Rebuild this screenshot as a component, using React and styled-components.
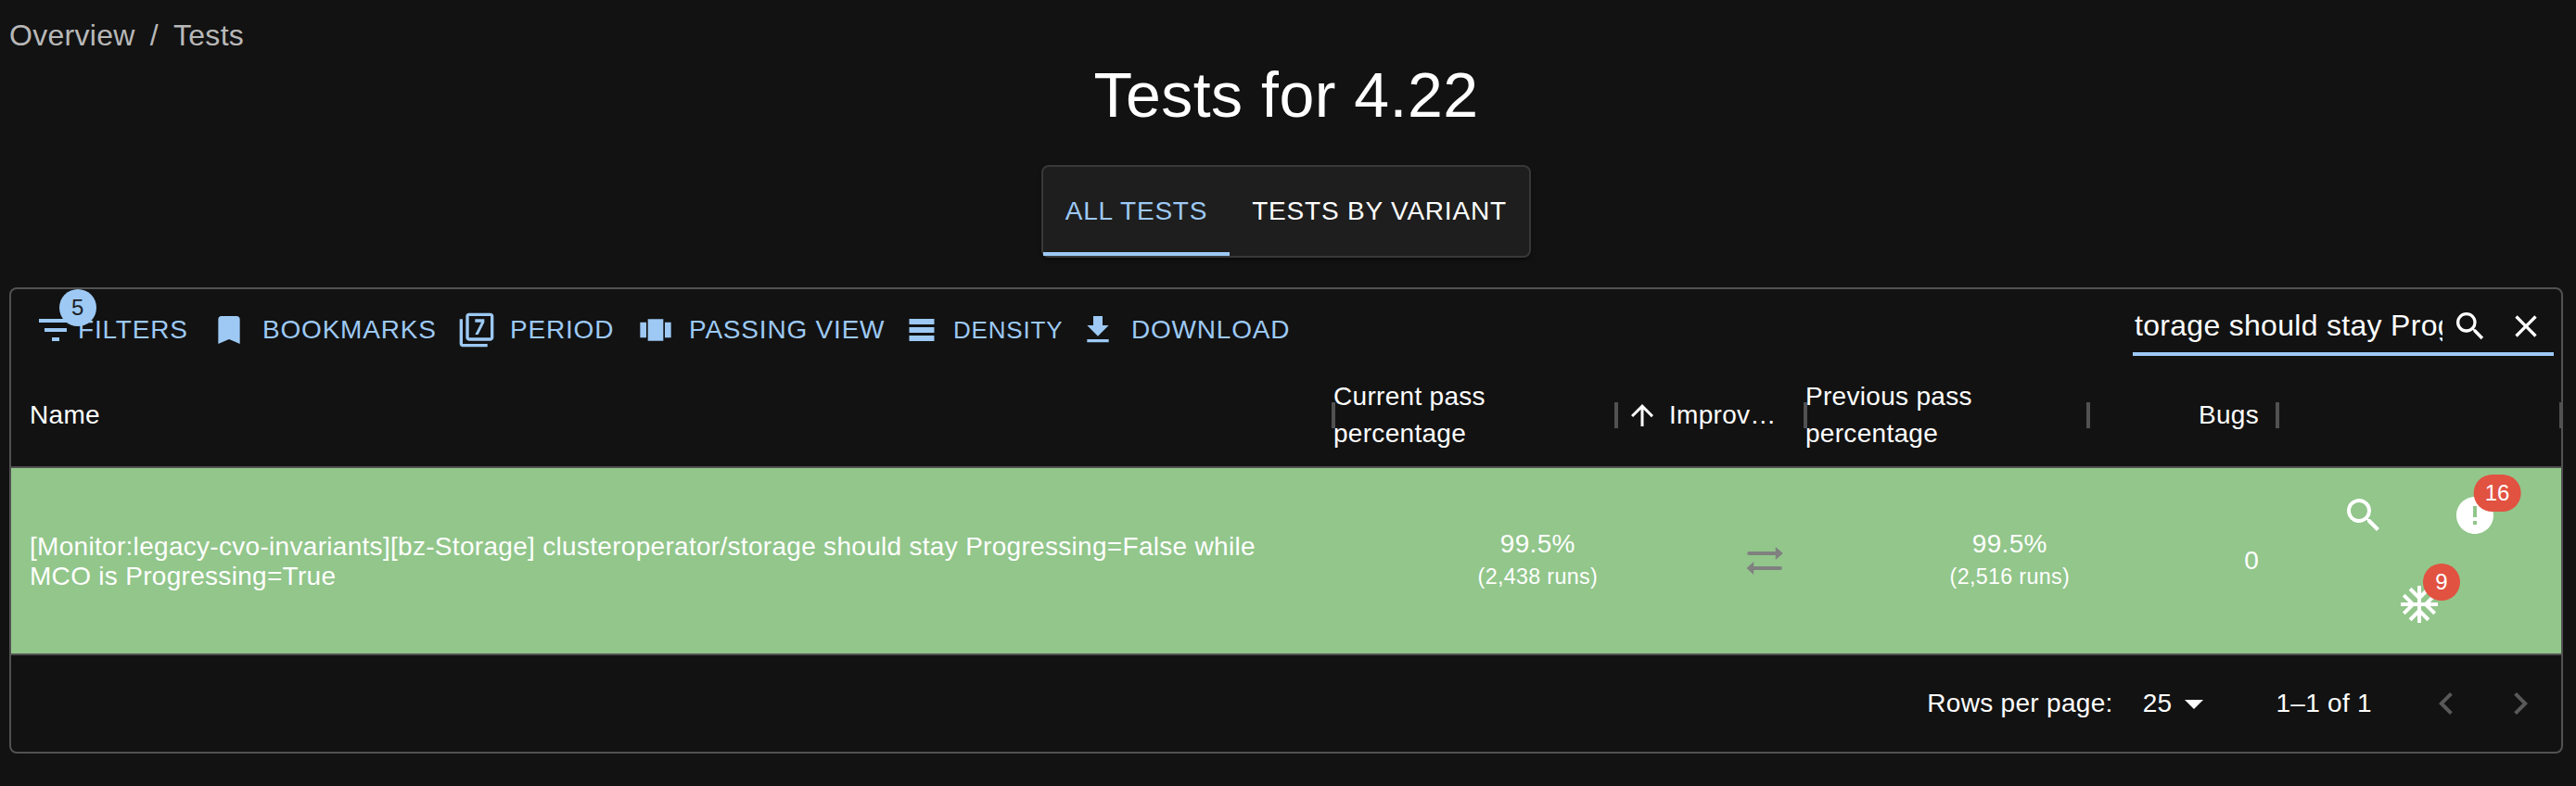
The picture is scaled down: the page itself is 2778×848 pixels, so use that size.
import React from 'react'
import styled, { createGlobalStyle } from 'styled-components'
import {
  MdAcUnit,
  MdArrowDropDown,
  MdArrowUpward,
  MdBookmark,
  MdClose,
  MdError,
  MdFilter7,
  MdFilterList,
  MdGetApp,
  MdKeyboardArrowLeft,
  MdKeyboardArrowRight,
  MdSearch,
  MdTableRows,
  MdViewCarousel,
} from 'react-icons/md'

const colors = {
  bg: '#121212',
  paper: '#1e1e1e',
  line: '#515151',
  primary: '#9dc9f4',
  success: '#92c68b',
  error: '#e15241',
}

const GlobalStyle = createGlobalStyle`
  * {
    box-sizing: border-box;
  }
  body {
    margin: 0;
    background: ${colors.bg};
    color: #fff;
    font-family: "Liberation Sans", Arial, sans-serif;
    font-size: 28px;
    letter-spacing: 0.3px;
  }
  svg {
    display: block;
    flex: none;
  }
`

const Page = styled.div`
  height: 848px;
  padding: 14px 14px 0 10px;
  overflow: hidden;
`

const Breadcrumbs = styled.nav`
  display: flex;
  height: 46px;
  line-height: 48px;
  font-size: 32px;
  color: #b8b8b8;
`

const Separator = styled.span`
  margin: 0 16px;
`

const Title = styled.h1`
  margin: 0;
  height: 84px;
  line-height: 84px;
  font-size: 68px;
  font-weight: 400;
  letter-spacing: 0.5px;
  text-align: center;
`

const Tabs = styled.div`
  display: flex;
  width: 528px;
  height: 100px;
  margin: 34px auto 32px;
  border: 2px solid #383838;
  border-radius: 8px;
  background: ${colors.paper};
  box-shadow: 0 3px 4px rgba(0, 0, 0, 0.35);
`

const Tab = styled.button`
  width: ${({ $width }) => $width}px;
  padding: 4px 0 0;
  border: none;
  border-bottom: 4px solid ${({ $active }) => ($active ? colors.primary : 'transparent')};
  background: none;
  color: ${({ $active }) => ($active ? colors.primary : '#fff')};
  font: inherit;
  letter-spacing: 0.8px;
  white-space: nowrap;
`

const Grid = styled.section`
  height: 503px;
  border: 2px solid ${colors.line};
  border-radius: 8px;
`

const Toolbar = styled.div`
  display: flex;
  height: 80px;
  padding: 14px 8px 0 24px;
`

const ToolButton = styled.button`
  display: flex;
  align-items: center;
  gap: ${({ $gap = 16 }) => $gap}px;
  width: ${({ $width }) => $width}px;
  height: 60px;
  padding: 0;
  border: none;
  background: none;
  color: ${colors.primary};
  font: inherit;
  font-size: ${({ $small }) => ($small ? 26 : 28)}px;
  letter-spacing: 0.8px;
  white-space: nowrap;
`

const SearchField = styled.div`
  display: flex;
  width: 454px;
  height: 58px;
  margin-left: auto;
  border-bottom: 4px solid ${colors.primary};
`

const SearchText = styled.div`
  flex: none;
  width: 334px;
  margin-right: 10px;
  padding-left: 2px;
  line-height: 50px;
  font-size: 32px;
  white-space: nowrap;
  overflow: hidden;
`

const SearchIcon = styled.span`
  flex: none;
  width: ${({ $width = 60 }) => $width}px;
  padding-top: 6px;
`

const BadgeAnchor = styled.span`
  position: relative;
  display: block;
`

const Badge = styled.span`
  position: absolute;
  top: 0;
  left: 100%;
  transform: translate(-50%, -50%);
  min-width: 40px;
  height: 40px;
  padding: 0 12px;
  border-radius: 20px;
  background: ${({ $error }) => ($error ? colors.error : colors.primary)};
  color: ${({ $error }) => ($error ? '#fff' : '#1c2126')};
  line-height: 40px;
  font-size: 24px;
  text-align: center;
`

const Row = styled.div`
  display: grid;
  grid-template-columns: 1426px 305px 204px 305px 204px 306px;
  border-bottom: 2px solid ${colors.line};
`

const HeadRow = styled(Row)`
  height: 113px;
`

const HeadCell = styled.div`
  position: relative;
  display: flex;
  align-items: center;
  justify-content: ${({ $right }) => ($right ? 'flex-end' : 'flex-start')};
  padding: 0 20px 0 ${({ $left = 0 }) => $left}px;
  line-height: 40px;

  &::after {
    content: '';
    position: absolute;
    right: ${({ $last }) => ($last ? 0 : -2)}px;
    top: 42px;
    width: ${({ $last }) => ($last ? 2 : 4)}px;
    height: 28px;
    background: ${colors.line};
  }
`

const SortLabel = styled.span`
  margin-left: 11px;
`

const DataRow = styled(Row)`
  height: 202px;
  background: ${colors.success};
`

const NameCell = styled.div`
  align-self: center;
  padding: 2px 80px 0 20px;
  line-height: 32px;
`

const Cell = styled.div`
  display: flex;
  align-items: center;
  justify-content: flex-end;
  padding-right: 20px;
`

const Percent = styled.div`
  padding-bottom: 2px;
  line-height: 36px;
  text-align: center;

  small {
    display: block;
    line-height: 34px;
    font-size: 23.33px;
  }
`

const Actions = styled.div`
  display: flex;
  flex-wrap: wrap;
  align-content: center;
  justify-content: center;
  gap: 16px 40px;
  padding: 0 50px 2px;
`

const IconButton = styled.button`
  display: grid;
  place-items: center;
  width: 80px;
  height: 80px;
  padding: 0;
  border: none;
  background: none;
  color: inherit;
  font: inherit;
`

const Footer = styled.footer`
  display: flex;
  align-items: center;
  justify-content: flex-end;
  height: 104px;
  padding-right: 20px;
`

const PageSize = styled.span`
  display: flex;
  align-items: center;
  margin: 0 64px 0 32px;
`

const PageArrow = styled.span`
  margin-left: ${({ $space }) => $space}px;
  color: #595959;
`

function FlatTrendIcon() {
  return (
    <svg width="48" height="48" viewBox="0 0 24 24" fill="gray">
      <path d="M3.6 7H17.9V4.5L21.9 8L17.9 11.5V9H3.6A1 1 0 0 1 3.6 7Z" />
      <path d="M20.4 15H6.1V12.5L2.3 16L6.1 19.5V17H20.4A1 1 0 0 0 20.4 15Z" />
    </svg>
  )
}

function PassRate({ value, runs }) {
  return (
    <Cell>
      <Percent>
        {value}
        <small>({runs} runs)</small>
      </Percent>
    </Cell>
  )
}

export default function App() {
  return (
    <Page>
      <GlobalStyle />
      <Breadcrumbs>
        <span>Overview</span>
        <Separator>/</Separator>
        <span>Tests</span>
      </Breadcrumbs>
      <Title>Tests for 4.22</Title>
      <Tabs>
        <Tab $active $width={201}>ALL TESTS</Tab>
        <Tab $width={323}>TESTS BY VARIANT</Tab>
      </Tabs>

      <Grid>
        <Toolbar>
          <ToolButton $width={191} $gap={0}>
            <BadgeAnchor>
              <MdFilterList size={48} />
              <Badge>5</Badge>
            </BadgeAnchor>
            FILTERS
          </ToolButton>
          <ToolButton $width={267}><MdBookmark size={40} />BOOKMARKS</ToolButton>
          <ToolButton $width={193}><MdFilter7 size={40} />PERIOD</ToolButton>
          <ToolButton $width={289}><MdViewCarousel size={40} />PASSING VIEW</ToolButton>
          <ToolButton $width={188} $small><MdTableRows size={36} />DENSITY</ToolButton>
          <ToolButton $width={240}><MdGetApp size={40} />DOWNLOAD</ToolButton>
          <SearchField>
            <SearchText>torage should stay Progressing=False</SearchText>
            <SearchIcon><MdSearch size={40} /></SearchIcon>
            <SearchIcon $width={50}><MdClose size={40} /></SearchIcon>
          </SearchField>
        </Toolbar>

        <HeadRow>
          <HeadCell $left={20}>Name</HeadCell>
          <HeadCell>Current pass<br />percentage</HeadCell>
          <HeadCell $left={10}>
            <MdArrowUpward size={36} />
            <SortLabel>Improv…</SortLabel>
          </HeadCell>
          <HeadCell>Previous pass<br />percentage</HeadCell>
          <HeadCell $right>Bugs</HeadCell>
          <HeadCell $last />
        </HeadRow>

        <DataRow>
          <NameCell>
            [Monitor:legacy-cvo-invariants][bz-Storage] clusteroperator/storage should stay Progressing=False while MCO is Progressing=True
          </NameCell>
          <PassRate value="99.5%" runs="2,438" />
          <Cell><FlatTrendIcon /></Cell>
          <PassRate value="99.5%" runs="2,516" />
          <Cell>0</Cell>
          <Actions>
            <IconButton><MdSearch size={48} /></IconButton>
            <IconButton>
              <BadgeAnchor>
                <MdError size={48} />
                <Badge $error>16</Badge>
              </BadgeAnchor>
            </IconButton>
            <IconButton>
              <BadgeAnchor>
                <MdAcUnit size={48} />
                <Badge $error>9</Badge>
              </BadgeAnchor>
            </IconButton>
          </Actions>
        </DataRow>

        <Footer>
          <span>Rows per page:</span>
          <PageSize>25<MdArrowDropDown size={48} /></PageSize>
          <span>1–1 of 1</span>
          <PageArrow $space={56}><MdKeyboardArrowLeft size={48} /></PageArrow>
          <PageArrow $space={32}><MdKeyboardArrowRight size={48} /></PageArrow>
        </Footer>
      </Grid>
    </Page>
  )
}
